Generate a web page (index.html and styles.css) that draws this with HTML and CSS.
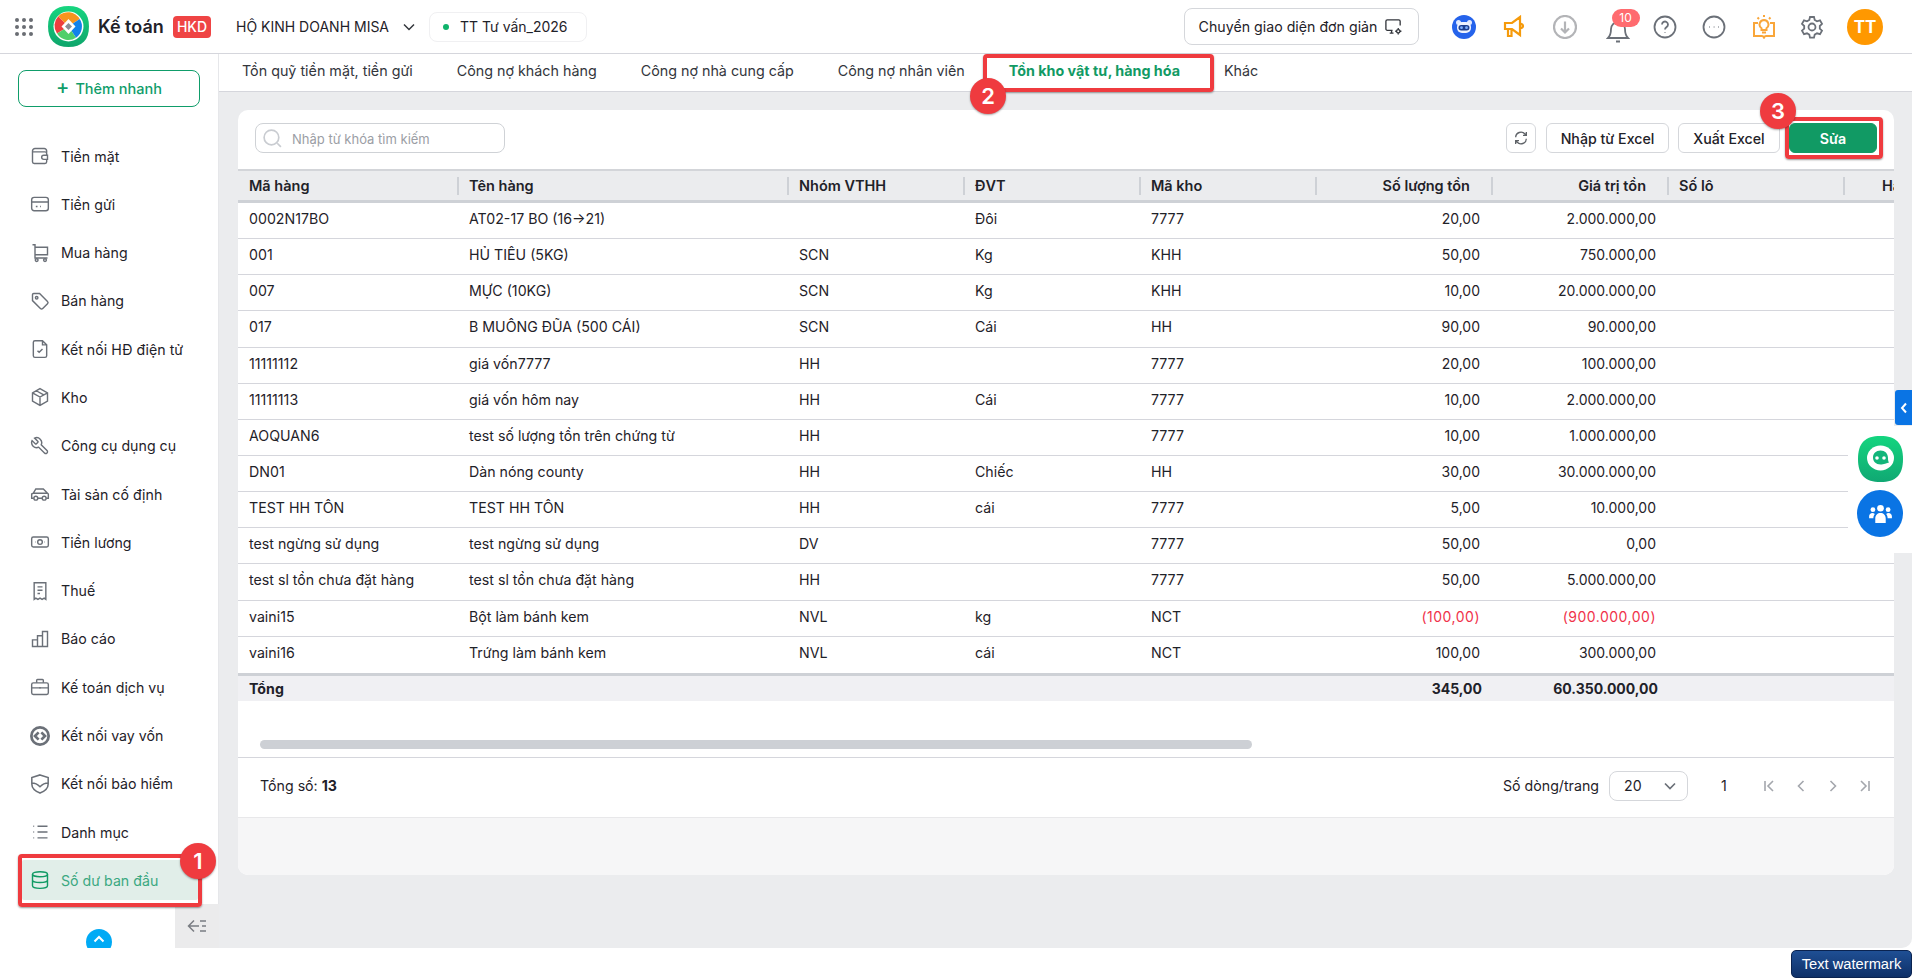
FILE: index.html
```html
<!DOCTYPE html>
<html lang="vi">
<head>
<meta charset="UTF-8">
<meta name="viewport" content="width=device-width, initial-scale=1.0">
<title>Kế toán - Số dư ban đầu</title>
<link rel="stylesheet" href="styles.css">
</head>
<body>
  <div id="app">
    <header id="topbar">
      <div class="dots"><i></i><i></i><i></i><i></i><i></i><i></i><i></i><i></i><i></i></div>
      <svg class="logo" viewBox="0 0 41 41">
        <defs><linearGradient id="logoBg" x1="0" y1="0" x2="0" y2="1"><stop offset="0" stop-color="#17d680"/><stop offset="1" stop-color="#0ea56b"/></linearGradient></defs>
        <path d="M20.5 0C34 0 41 7 41 20.5S34 41 20.5 41 0 34 0 20.5 7 0 20.5 0z" fill="url(#logoBg)"/>
        <circle cx="20.5" cy="20.5" r="15" fill="#fff"/>
        <path d="M20.5 20.5L10.3 10.3A13.5 13.5 0 0 0 9 27.5z" fill="#ee3f3f"/>
        <path d="M20.5 20.5L10.3 10.3A13.5 13.5 0 0 1 31.7 13z" fill="#f7941d"/>
        <path d="M20.5 20.5L31.7 13A13.5 13.5 0 0 1 28 31.7z" fill="#1282ea"/>
        <path d="M20.5 20.5L28 31.7A13.5 13.5 0 0 1 9 27.5z" fill="#4fcf6a"/>
        <path d="M20.5 13l7 7.5-7 7.5-7-7.5z" fill="#fff"/>
        <path d="M20.5 17l3.5 3.5-3.5 3.5-3.5-3.5z" fill="#8b8f96"/>
      </svg>
      <span class="app-name">Kế toán</span>
      <span class="hkd">HKD</span>
      <span class="org">HỘ KINH DOANH MISA</span>
      <svg class="org-arrow" viewBox="0 0 12 8"><path d="M1 1.5l5 5 5-5"/></svg>
      <div class="period"><i></i>TT Tư vấn_2026</div>
      <div class="top-right">
        <button class="switch-btn">Chuyển giao diện đơn giản
          <svg viewBox="0 0 20 20"><path d="M9 14H3.5A1.5 1.5 0 0 1 2 12.500V4.500A1.500 1.500 0 0 1 3.500 3h12A1.500 1.500 0 0 1 17 4.500V9M6 17h4M8 14v3"/><circle cx="15" cy="15" r="1.800"/><path d="M15 11.500v1.600M15 17v1.500M11.800 15h1.400M16.800 15h1.500"/></svg>
        </button>
        <div class="tool">
          <svg viewBox="0 0 24 24"><circle cx="12" cy="12" r="12" fill="#2563eb"/><circle cx="6.500" cy="7.500" r="2.500" fill="#dfe9ff"/><circle cx="17.500" cy="7.500" r="2.500" fill="#dfe9ff"/><rect x="5" y="7" width="14" height="11" rx="5" fill="#eef3ff"/><rect x="6.500" y="10" width="11" height="5.500" rx="2.700" fill="#1d3f8f"/><circle cx="9.500" cy="12.700" r="1.400" fill="#7fb0ff"/><circle cx="14.500" cy="12.700" r="1.400" fill="#7fb0ff"/></svg>
        </div>
        <div class="tool">
          <svg viewBox="0 0 24 24" class="line orange"><path d="M3 8h7l8-6v18l-8-6H3zM18 8.500c2 .5 3 1.300 3 2.500s-1 2-3 2.500M6 14v7h3.500v-7"/></svg>
        </div>
        <div class="tool nudge">
          <svg viewBox="0 0 24 24" class="line pale"><circle cx="12" cy="12" r="11"/><path d="M12 6.500v10.500M8 13.500l4 4 4-4"/></svg>
        </div>
        <div class="tool bell">
          <svg viewBox="0 0 24 24" class="line"><path d="M12 3a7 7 0 0 0-7 7c0 5-1 7-3 9h20c-2-2-3-4-3-9a7 7 0 0 0-7-7zM10 22.500h4"/></svg>
          <span class="bell-count">10</span>
        </div>
        <div class="tool nudge">
          <svg viewBox="0 0 24 24" class="line"><circle cx="12" cy="12" r="10.500"/><path d="M9 9.500a3 3 0 1 1 4.500 2.600c-1 .6-1.500 1.200-1.500 2.400M12 17.500v.5"/></svg>
        </div>
        <div class="tool nudge">
          <svg viewBox="0 0 24 24" class="line"><circle cx="12" cy="12" r="10.500"/><path d="M7.500 12h.5M11.800 12h.5M16 12h.5"/></svg>
        </div>
        <div class="tool nudge">
          <svg viewBox="0 0 24 24" class="line light"><path d="M12 5a4.500 4.500 0 0 0-2.500 8.200V15h5v-1.800A4.500 4.500 0 0 0 12 5zM10 17.500h4M12 0v2M5.500 2.500l1.500 1.500M18.500 2.500L17 4M6 8H2v13h8c1 0 1.500.5 2 1.500.5-1 1-1.500 2-1.500h8V8h-4"/></svg>
        </div>
        <div class="tool">
          <svg viewBox="0 0 24 24" class="line"><path d="M10 2h4l.7 3 2.300 1.300 3-.9 2 3.500-2.200 2.100v2.600l2.200 2.100-2 3.500-3-.9-2.300 1.300-.7 3h-4l-.7-3L7 18.300l-3 .9-2-3.500 2.200-2.100v-2.600L2 8.900l2-3.500 3 .9 2.300-1.300z"/><circle cx="12" cy="12" r="3.500"/></svg>
        </div>
        <div class="avatar">TT</div>
      </div>
    </header>

    <div id="body">
      <aside id="sidebar">
        <button class="quick-add"><span>+</span>Thêm nhanh</button>
        <nav class="menu">
          <a class="menu-item"><svg viewBox="0 0 24 24"><path d="M20 8V6a3 3 0 0 0-3-3H6a3 3 0 0 0-3 3v13a2 2 0 0 0 2 2h13a2 2 0 0 0 2-2v-3M3 7h15a2 2 0 0 1 2 2v2M21 11h-4.500a2.500 2.500 0 0 0 0 5H21z"/></svg>Tiền mặt</a>
          <a class="menu-item"><svg viewBox="0 0 24 24"><rect x="2" y="4" width="20" height="16" rx="3"/><path d="M2 9.500h20M7 15h2M12 15h1"/></svg>Tiền gửi</a>
          <a class="menu-item"><svg viewBox="0 0 24 24"><path d="M3 2h3v16h15M6 5h15v9H6"/><circle cx="8" cy="20.500" r="1.700"/><circle cx="18" cy="20.500" r="1.700"/></svg>Mua hàng</a>
          <a class="menu-item"><svg viewBox="0 0 24 24"><path d="M3 4.500A1.500 1.500 0 0 1 4.500 3h7l9.500 9.500a2 2 0 0 1 0 2.800l-5.700 5.700a2 2 0 0 1-2.800 0L3 11.500z"/><circle cx="8" cy="8" r="1.500"/></svg>Bán hàng</a>
          <a class="menu-item"><svg viewBox="0 0 24 24"><path d="M6 2h9l5 5v13a2 2 0 0 1-2 2H6a2 2 0 0 1-2-2V4a2 2 0 0 1 2-2zM15 2v5h5M9 14l2 2 4-4"/></svg>Kết nối HĐ điện tử</a>
          <a class="menu-item"><svg viewBox="0 0 24 24"><path d="M12 2l9 5v10l-9 5-9-5V7zM3 7l9 5 9-5M12 12v10M7.500 4.500l9 5"/></svg>Kho</a>
          <a class="menu-item"><svg viewBox="0 0 24 24"><path transform="matrix(-1 0 0 1 24 0)" d="M14.700 6.300a1 1 0 0 0 0 1.400l1.600 1.600a1 1 0 0 0 1.400 0l3.770-3.770a6 6 0 0 1-7.940 7.940l-6.910 6.910a2.120 2.120 0 0 1-3-3l6.910-6.910a6 6 0 0 1 7.940-7.940l-3.760 3.760z"/></svg>Công cụ dụng cụ</a>
          <a class="menu-item"><svg viewBox="0 0 24 24"><path d="M4.500 17H2v-5l2-1 3-5h9l5 5 1 1v5h-2.500M9.500 17h5M4 11h17"/><circle cx="7" cy="17" r="2.300"/><circle cx="17" cy="17" r="2.300"/></svg>Tài sản cố định</a>
          <a class="menu-item"><svg viewBox="0 0 24 24"><rect x="2" y="6" width="20" height="12" rx="2"/><circle cx="12" cy="12" r="2.800"/><path d="M6 12h.5M17.500 12h.5"/></svg>Tiền lương</a>
          <a class="menu-item"><svg viewBox="0 0 24 24"><path d="M5 2h14v20l-2-1.500-2.500 1.500-2.500-1.500L9.500 22 7 20.500 5 22zM9 7h6M9 11h6M9 15h3"/></svg>Thuế</a>
          <a class="menu-item"><svg viewBox="0 0 24 24"><path d="M3 21v-8h6v8zM9 21V8h6v13zM15 21V3h6v18z"/></svg>Báo cáo</a>
          <a class="menu-item"><svg viewBox="0 0 24 24"><rect x="2" y="7" width="20" height="14" rx="2"/><path d="M8 7V4a1 1 0 0 1 1-1h6a1 1 0 0 1 1 1v3M2 13h20M12 12v2"/></svg>Kế toán dịch vụ</a>
          <a class="menu-item"><svg viewBox="1 1 22 22" class="heavy"><circle cx="12" cy="12" r="9.500"/><path d="M10.500 8l-4 4 4 4M13.500 8l4 4-4 4"/></svg>Kết nối vay vốn</a>
          <a class="menu-item"><svg viewBox="2 1 20 22"><path d="M12 2l9 3v7c0 5-4 8-9 10-5-2-9-5-9-10V5zM3 11c4 0 6 1 9 4 3-3 5-4 9-4"/></svg>Kết nối bảo hiểm</a>
          <a class="menu-item"><svg viewBox="0 0 24 24"><path d="M9 5h12M9 12h12M9 19h12M4 5h1M4 12h1M4 19h1"/></svg>Danh mục</a>
          <a class="menu-item active"><svg viewBox="0 0 24 24"><ellipse cx="12" cy="5" rx="9" ry="3"/><path d="M3 5v14c0 1.700 4 3 9 3s9-1.300 9-3V5M3 12c0 1.700 4 3 9 3s9-1.300 9-3"/></svg>Số dư ban đầu</a>
        </nav>
        <div class="side-foot">
          <div class="side-up"><span><svg viewBox="0 0 12 8"><path d="M1.500 6.500L6 2l4.500 4.500"/></svg></span></div>
          <div class="side-collapse"><svg viewBox="0 0 20 14"><path d="M7 1.500L1.500 7 7 12.500M2 7h10M13 2h6M15 7h4M13 12h6"/></svg></div>
        </div>
      </aside>

      <main id="main">
        <div class="tabs">
          <a class="tab">Tồn quỹ tiền mặt, tiền gửi</a>
          <a class="tab">Công nợ khách hàng</a>
          <a class="tab">Công nợ nhà cung cấp</a>
          <a class="tab">Công nợ nhân viên</a>
          <a class="tab active">Tồn kho vật tư, hàng hóa</a>
          <a class="tab">Khác</a>
        </div>
        <div class="content">
          <section class="card">
            <div class="toolbar">
              <div class="search">
                <svg viewBox="0 0 20 20"><circle cx="9" cy="9" r="7"/><path d="M14.500 14.500l3.500 3.500"/></svg>
                Nhập từ khóa tìm kiếm
              </div>
              <div class="actions">
                <button class="btn icon-btn"><svg viewBox="0 0 24 24"><path d="M4 11a8 8 0 0 1 14-5l2 2M20 3v5h-5M20 13a8 8 0 0 1-14 5l-2-2M4 21v-5h5"/></svg></button>
                <button class="btn import-btn">Nhập từ Excel</button>
                <button class="btn export-btn">Xuất Excel</button>
                <button class="btn primary">Sửa</button>
              </div>
            </div>

            <div class="grid">
              <div class="row head">
                <div class="hcell">Mã hàng</div>
                <div class="hcell">Tên hàng</div>
                <div class="hcell">Nhóm VTHH</div>
                <div class="hcell">ĐVT</div>
                <div class="hcell">Mã kho</div>
                <div class="hcell num">Số lượng tồn</div>
                <div class="hcell num">Giá trị tồn</div>
                <div class="hcell">Số lô</div>
                <div class="hcell last">Hạn sử dụng</div>
              </div>
              <div class="row"><div>0002N17BO</div><div>AT02-17 BO (16→21)</div><div></div><div>Đôi</div><div>7777</div><div class="num">20,00</div><div class="num">2.000.000,00</div><div></div><div></div></div>
              <div class="row"><div>001</div><div>HỦ TIẾU (5KG)</div><div>SCN</div><div>Kg</div><div>KHH</div><div class="num">50,00</div><div class="num">750.000,00</div><div></div><div></div></div>
              <div class="row"><div>007</div><div>MỰC (10KG)</div><div>SCN</div><div>Kg</div><div>KHH</div><div class="num">10,00</div><div class="num">20.000.000,00</div><div></div><div></div></div>
              <div class="row"><div>017</div><div>B MUỖNG ĐŨA (500 CÁI)</div><div>SCN</div><div>Cái</div><div>HH</div><div class="num">90,00</div><div class="num">90.000,00</div><div></div><div></div></div>
              <div class="row"><div>11111112</div><div>giá vốn7777</div><div>HH</div><div></div><div>7777</div><div class="num">20,00</div><div class="num">100.000,00</div><div></div><div></div></div>
              <div class="row"><div>11111113</div><div>giá vốn hôm nay</div><div>HH</div><div>Cái</div><div>7777</div><div class="num">10,00</div><div class="num">2.000.000,00</div><div></div><div></div></div>
              <div class="row"><div>AOQUAN6</div><div>test số lượng tồn trên chứng từ</div><div>HH</div><div></div><div>7777</div><div class="num">10,00</div><div class="num">1.000.000,00</div><div></div><div></div></div>
              <div class="row"><div>DN01</div><div>Dàn nóng county</div><div>HH</div><div>Chiếc</div><div>HH</div><div class="num">30,00</div><div class="num">30.000.000,00</div><div></div><div></div></div>
              <div class="row"><div>TEST HH TỒN</div><div>TEST HH TỒN</div><div>HH</div><div>cái</div><div>7777</div><div class="num">5,00</div><div class="num">10.000,00</div><div></div><div></div></div>
              <div class="row"><div>test ngừng sử dụng</div><div>test ngừng sử dụng</div><div>DV</div><div></div><div>7777</div><div class="num">50,00</div><div class="num">0,00</div><div></div><div></div></div>
              <div class="row"><div>test sl tồn chưa đặt hàng</div><div>test sl tồn chưa đặt hàng</div><div>HH</div><div></div><div>7777</div><div class="num">50,00</div><div class="num">5.000.000,00</div><div></div><div></div></div>
              <div class="row"><div>vaini15</div><div>Bột làm bánh kem</div><div>NVL</div><div>kg</div><div>NCT</div><div class="num neg">(100,00)</div><div class="num neg">(900.000,00)</div><div></div><div></div></div>
              <div class="row"><div>vaini16</div><div>Trứng làm bánh kem</div><div>NVL</div><div>cái</div><div>NCT</div><div class="num">100,00</div><div class="num">300.000,00</div><div></div><div></div></div>
              <div class="row total"><div>Tổng</div><div></div><div></div><div></div><div></div><div class="num">345,00</div><div class="num">60.350.000,00</div><div></div><div></div></div>
            </div>

            <div class="hscroll"><div class="hscroll-thumb"></div></div>

            <div class="pager">
              <div>Tổng số: <b>13</b></div>
              <div class="pager-right">
                <span>Số dòng/trang</span>
                <div class="page-size">20<svg viewBox="0 0 12 8"><path d="M1 1.500l5 5 5-5"/></svg></div>
                <span class="page-no">1</span>
                <svg class="page-ico" viewBox="0 0 14 14"><path d="M3 2v10M11 2L6 7l5 5"/></svg>
                <svg class="page-ico" viewBox="0 0 14 14"><path d="M9.500 2l-5 5 5 5"/></svg>
                <svg class="page-ico" viewBox="0 0 14 14"><path d="M4.500 2l5 5-5 5"/></svg>
                <svg class="page-ico" viewBox="0 0 14 14"><path d="M11 2v10M3 2l5 5-5 5"/></svg>
              </div>
            </div>
            <div class="card-bottom"></div>
          </section>
        </div>
      </main>
    </div>

    <!-- noi len tren bang -->
    <div class="float-panel">
      <svg class="float-chat" viewBox="0 0 45 46">
        <defs><linearGradient id="chatBg" x1="0" y1="0" x2="0" y2="1"><stop offset="0" stop-color="#14d57f"/><stop offset="1" stop-color="#10a873"/></linearGradient></defs>
        <path d="M22.500 0C38 0 45 7 45 23S38 46 22.500 46 0 39 0 23 7 0 22.500 0z" fill="url(#chatBg)"/>
        <ellipse cx="22.500" cy="22" rx="13.500" ry="12.500" fill="#fff"/>
        <path d="M22.500 14.500c4.500 0 7.500 3 7.500 7.500 0 1.500 0 3 1 4.500l-4 1.200c-1.200.5-3 .8-4.500.8-4.500 0-7.500-3-7.500-7s3-7 7.500-7z" fill="#12b57a"/>
        <circle cx="19" cy="22" r="1.800" fill="#fff"/><circle cx="26" cy="22" r="1.800" fill="#fff"/>
      </svg>
      <div class="float-group">
        <svg viewBox="0 0 24 20" fill="#fff"><circle cx="12" cy="4.500" r="3.500"/><circle cx="4" cy="6" r="2.500"/><circle cx="20" cy="6" r="2.500"/><path d="M6.500 20v-4.500C6.500 11.500 9 9.500 12 9.500s5.500 2 5.500 6V20zM0 15v-2c0-2 1.500-3.500 3.500-3.500 1 0 1.800.3 2.500 1-1 1.200-1.500 2.700-1.500 4.500zM24 15v-2c0-2-1.500-3.500-3.500-3.500-1 0-1.800.3-2.500 1 1 1.200 1.500 2.700 1.500 4.500z"/></svg>
      </div>
    </div>
    <div class="side-tab"><svg viewBox="0 0 8 12"><path d="M6 1.500L2 6l4 4.500"/></svg></div>

    <!-- khung do huong dan -->
    <div class="mark mark-menu"></div>
    <div class="mark mark-tab"></div>
    <div class="mark mark-edit"></div>
    <div class="step step-1">1</div>
    <div class="step step-2">2</div>
    <div class="step step-3">3</div>
  </div>

  <div class="page-foot"><div class="watermark">Text watermark</div></div>
</body>
</html>
```

FILE: styles.css
```css
* {
  box-sizing: border-box;
}
html, body {
  margin: 0;
  padding: 0;
  height: 978px;
  overflow: hidden;
  background-color: #fff;
}
body {
  font-family: Inter, "Noto Sans", sans-serif;
  font-size: 14.2px;
  color: #1f2229;
}
button {
  font-family: inherit;
  font-size: 14.2px;
  color: inherit;
  background: #fff;
  cursor: pointer;
}
svg {
  display: block;
  flex: none;
}

#app {
  position: relative;
  width: 1912px;
  height: 948px;
  display: flex;
  flex-direction: column;
  border-radius: 0 0 10px 10px;
  overflow: hidden;
}

/* top bar */
#topbar {
  height: 54px;
  flex: none;
  display: flex;
  align-items: center;
  padding-left: 15px;
  border-bottom: 1px solid #d5d6dc;
  background-color: #fff;
}
.dots {
  width: 18px;
  height: 18px;
  display: grid;
  grid-template-columns: repeat(3, 4px);
  grid-template-rows: repeat(3, 4px);
  justify-content: space-between;
  align-content: space-between;
}
.dots i {
  background-color: #6a6d73;
  border-radius: 50%;
}
.logo {
  width: 41px;
  height: 41px;
  margin-left: 15px;
}
.app-name {
  margin-left: 9px;
  font-size: 18px;
  font-weight: 600;
  width: 66px;
  white-space: nowrap;
}
.hkd {
  margin-left: 9px;
  width: 38px;
  height: 22px;
  line-height: 22px;
  text-align: center;
  background-color: #ef4444;
  color: #fff;
  border-radius: 4px;
  font-size: 14px;
  font-weight: 500;
}
.org {
  margin-left: 25px;
  width: 166px;
  white-space: nowrap;
  font-size: 14px;
}
.org-arrow {
  width: 12px;
  height: 8px;
  margin-left: 1px;
  fill: none;
  stroke: #33363c;
  stroke-width: 1.5;
}
.period {
  margin-left: 14px;
  height: 30px;
  width: 158px;
  display: flex;
  align-items: center;
  padding-left: 13px;
  border: 1px solid #f0f0f2;
  border-radius: 8px;
  font-size: 14px;
}
.period i {
  width: 6px;
  height: 6px;
  border-radius: 50%;
  background-color: #0fb36b;
  margin-right: 11px;
}
.top-right {
  margin-left: auto;
  display: flex;
  align-items: center;
  padding-right: 29px;
}
.switch-btn {
  width: 235px;
  height: 37px;
  display: flex;
  align-items: center;
  justify-content: center;
  gap: 7px;
  border: 1px solid #d5d7db;
  border-radius: 8px;
  margin-right: 21px;
  padding: 0;
  font-size: 14.2px;
}
.switch-btn svg {
  width: 19px;
  height: 19px;
  fill: none;
  stroke: #33363c;
  stroke-width: 1.4;
}
.tool {
  width: 49.7px;
  height: 36px;
  display: flex;
  align-items: center;
  justify-content: center;
  position: relative;
}
.tool svg {
  width: 24px;
  height: 24px;
}
.tool.nudge {
  padding-left: 3px;
}
.line {
  fill: none;
  stroke: #6b7078;
  stroke-width: 1.8;
}
.line.orange {
  stroke: #f59a0b;
  stroke-width: 2.2;
}
.line.light {
  stroke: #f9a63a;
  stroke-width: 2;
}
.line.pale {
  stroke: #b3b4b7;
  stroke-width: 2.2;
}
.bell svg {
  margin-left: 10px;
  margin-top: 8px;
}
.bell-count {
  position: absolute;
  left: 23px;
  top: 0;
  width: 28px;
  height: 18px;
  line-height: 18px;
  border-radius: 10px;
  text-align: center;
  font-size: 12px;
  color: #fff;
  background-color: #ff6b6f;
}
.avatar {
  width: 36px;
  height: 36px;
  margin-left: 10px;
  border-radius: 50%;
  background-color: #ff9800;
  color: #fff;
  font-weight: 700;
  font-size: 17px;
  line-height: 36px;
  text-align: center;
}

#body {
  flex: 1;
  display: flex;
  min-height: 0;
}

/* left menu */
#sidebar {
  width: 219px;
  flex: none;
  display: flex;
  flex-direction: column;
  background-color: #fff;
  border-right: 1px solid #e6e7ea;
}
.quick-add {
  flex: none;
  width: 182px;
  height: 37px;
  margin: 16px 0 29px 18px;
  border: 1px solid #0f9d6a;
  border-radius: 8px;
  color: #0f9d6a;
  font-weight: 500;
  font-size: 14.5px;
}
.quick-add span {
  font-size: 20px;
  line-height: 14px;
  margin-right: 6px;
}
.menu {
  flex: 1;
  min-height: 0;
}
.menu-item {
  height: 40px;
  width: 176px;
  margin: 0 0 8.3px 22px;
  display: flex;
  align-items: center;
  gap: 11px;
  padding-left: 8px;
  border-radius: 2px;
  white-space: nowrap;
}
.menu-item svg {
  width: 20px;
  height: 20px;
  fill: none;
  stroke: #6b7078;
  stroke-width: 1.7;
}
.menu-item svg.heavy {
  stroke-width: 3;
}
.menu-item.active {
  background-color: #e1eee9;
  color: #3ba881;
}
.menu-item.active svg {
  stroke: #119a64;
}
.side-foot {
  height: 44px;
  flex: none;
  display: flex;
  margin-right: -1px;
}
.side-up {
  width: 175px;
  padding: 25px 0 0 86px;
  overflow: hidden;
}
.side-up span {
  width: 26px;
  height: 26px;
  display: flex;
  justify-content: center;
  padding-top: 6px;
  border-radius: 50%;
  background-color: #00aaf5;
}
.side-up svg {
  width: 12px;
  height: 8px;
  fill: none;
  stroke: #fff;
  stroke-width: 2;
}
.side-collapse {
  width: 44px;
  display: flex;
  align-items: center;
  justify-content: center;
  background-color: #ebebec;
}
.side-collapse svg {
  width: 20px;
  height: 14px;
  fill: none;
  stroke: #7a7d83;
  stroke-width: 1.5;
}

/* main */
#main {
  flex: 1;
  min-width: 0;
  display: flex;
  flex-direction: column;
}
.tabs {
  height: 38px;
  flex: none;
  display: flex;
  align-items: center;
  gap: 44px;
  padding: 0 0 4px 23px;
  background-color: #fff;
  border-bottom: 1px solid #d5d6dc;
  font-size: 14.3px;
}
.tab {
  white-space: nowrap;
  color: #33363c;
}
.tab.active {
  color: #119a64;
  font-weight: 700;
}
.content {
  flex: 1;
  background-color: #ebecee;
  padding: 18px 18px 0 19px;
}
.card {
  height: 765px;
  display: flex;
  flex-direction: column;
  background-color: #fff;
  border-radius: 10px;
  overflow: hidden;
}
.toolbar {
  height: 59px;
  flex: none;
  display: flex;
  justify-content: space-between;
  align-items: flex-start;
  padding: 13px 17px 0;
}
.search {
  width: 250px;
  height: 30px;
  display: flex;
  align-items: center;
  gap: 9px;
  padding: 1px 0 0 6px;
  border: 1px solid #cfd2d6;
  border-radius: 8px;
  color: #9b9ea5;
  font-size: 13px;
}
.search svg {
  width: 21px;
  height: 21px;
  fill: none;
  stroke: #c9ccd1;
  stroke-width: 1.6;
}
.actions {
  display: flex;
  gap: 9px;
}
.btn {
  height: 30px;
  padding: 0;
  border: 1px solid #d5d7db;
  border-radius: 6px;
  font-weight: 500;
  white-space: nowrap;
}
.icon-btn {
  width: 30px;
  display: flex;
  align-items: center;
  justify-content: center;
  margin-right: 1px;
}
.icon-btn svg {
  width: 16px;
  height: 16px;
  fill: none;
  stroke: #5f6368;
  stroke-width: 2;
}
.import-btn {
  width: 123px;
}
.export-btn {
  width: 102px;
}
.btn.primary {
  width: 88px;
  background-color: #119a64;
  border-color: #119a64;
  color: #fff;
  font-weight: 600;
}

/* bang */
.grid {
  flex: none;
  overflow: hidden;
}
.row {
  display: grid;
  grid-template-columns: 219px 330px 176px 176px 176px 176px 176px 176px 100px;
  height: 36.15px;
  align-items: center;
  padding-bottom: 4px;
  border-bottom: 1px solid #d5d6dc;
}
.row > div {
  padding: 0 11px 0 12px;
  white-space: nowrap;
  overflow: hidden;
}
.row > div:first-child {
  padding-left: 11px;
}
.row:nth-last-child(2) {
  border-bottom: none;
}
.num {
  text-align: right;
  font-size: 14px;
}
.neg {
  color: #f0324a;
  letter-spacing: 0.5px;
}
.row.head {
  height: 34px;
  padding-bottom: 0;
  background-color: #ebecee;
  border-top: 2px solid #d3d5d9;
  border-bottom: 3px solid #ced1d6;
  font-weight: 600;
  font-size: 14.5px;
}
.row.head > div {
  height: 18px;
  line-height: 18px;
  padding-left: 10px;
  border-left: 2px solid #ced1d6;
}
.row.head > div:first-child {
  padding-left: 11px;
  border-left: none;
}
.row.head > div.num {
  padding-right: 21px;
  font-size: 14.5px;
}
.row.head > div.last {
  padding-left: 37px;
  overflow: visible;
}
.row.total {
  height: 28px;
  padding-bottom: 0;
  background-color: #f0f0f3;
  border-top: 3px solid #ced1d6;
  border-bottom: none;
  font-weight: 700;
}
.row.total > .num {
  padding-right: 9px;
}

.hscroll {
  flex: none;
  height: 57px;
  padding: 39px 0 0 22px;
  border-bottom: 1px solid #d5d6dc;
}
.hscroll-thumb {
  width: 992px;
  height: 9px;
  border-radius: 5px;
  background-color: #cdd0d5;
}
.pager {
  flex: none;
  height: 60px;
  display: flex;
  align-items: center;
  justify-content: space-between;
  padding: 0 22px 3px;
  border-bottom: 1px solid #e8e8ea;
}
.pager-right {
  display: flex;
  align-items: center;
}
.page-size {
  width: 79px;
  height: 30px;
  margin-left: 10px;
  display: flex;
  align-items: center;
  justify-content: space-between;
  padding: 0 11px 0 14px;
  border: 1px solid #d5d7db;
  border-radius: 8px;
}
.page-size svg {
  width: 12px;
  height: 8px;
  fill: none;
  stroke: #6b7078;
  stroke-width: 1.7;
}
.page-no {
  width: 32px;
  margin: 0 22px 0 20px;
  text-align: center;
}
.page-ico {
  width: 14px;
  height: 14px;
  margin-right: 18px;
  fill: none;
  stroke: #a4a7ad;
  stroke-width: 1.6;
}
.page-ico:last-child {
  margin-right: 0;
}
.card-bottom {
  flex: 1;
  background-color: #f6f6f7;
}

/* noi */
.float-panel {
  position: absolute;
  left: 1848px;
  top: 426px;
  width: 64px;
  height: 127px;
  background-color: #fff;
  padding: 10px 0 0 10px;
}
.float-chat {
  width: 45px;
  height: 46px;
}
.float-group {
  width: 46px;
  height: 47px;
  margin-top: 8px;
  margin-left: -1px;
  border-radius: 50%;
  background-color: #0a74e4;
  display: flex;
  align-items: center;
  justify-content: center;
}
.float-group svg {
  width: 23px;
  height: 19px;
}
.side-tab {
  position: absolute;
  left: 1895px;
  top: 390px;
  width: 17px;
  height: 35px;
  background-color: #0a74e4;
  border-radius: 3px 0 0 3px;
  display: flex;
  align-items: center;
  justify-content: center;
}
.side-tab svg {
  width: 8px;
  height: 12px;
  fill: none;
  stroke: #fff;
  stroke-width: 2;
}

/* huong dan */
.mark {
  position: absolute;
  border: 4px solid #ef3b3f;
  border-radius: 4px;
  box-shadow: 0 1px 2px rgba(0, 0, 0, 0.4);
}
.mark-menu {
  left: 18px;
  top: 854px;
  width: 184px;
  height: 53px;
}
.mark-tab {
  left: 983px;
  top: 54px;
  width: 231px;
  height: 38px;
}
.mark-edit {
  left: 1785px;
  top: 117px;
  width: 98px;
  height: 42px;
}
.step {
  position: absolute;
  width: 36px;
  height: 36px;
  line-height: 36px;
  text-align: center;
  border-radius: 50%;
  background-color: #ef3b3f;
  color: #fff;
  font-size: 22px;
  font-weight: 600;
  box-shadow: 0 1px 2px rgba(0, 0, 0, 0.35);
}
.step-1 {
  left: 180px;
  top: 843px;
}
.step-2 {
  left: 970px;
  top: 78px;
}
.step-3 {
  left: 1760px;
  top: 93px;
}

.page-foot {
  height: 30px;
  display: flex;
  justify-content: flex-end;
  padding-top: 2px;
}
.watermark {
  width: 121px;
  height: 28px;
  line-height: 26px;
  text-align: center;
  border: 1px solid #0a2350;
  border-radius: 5px;
  background: linear-gradient(#1f4f94, #0e3068);
  color: #fff;
  font-family: "Liberation Sans", Arial, sans-serif;
  font-size: 14.7px;
}
```
